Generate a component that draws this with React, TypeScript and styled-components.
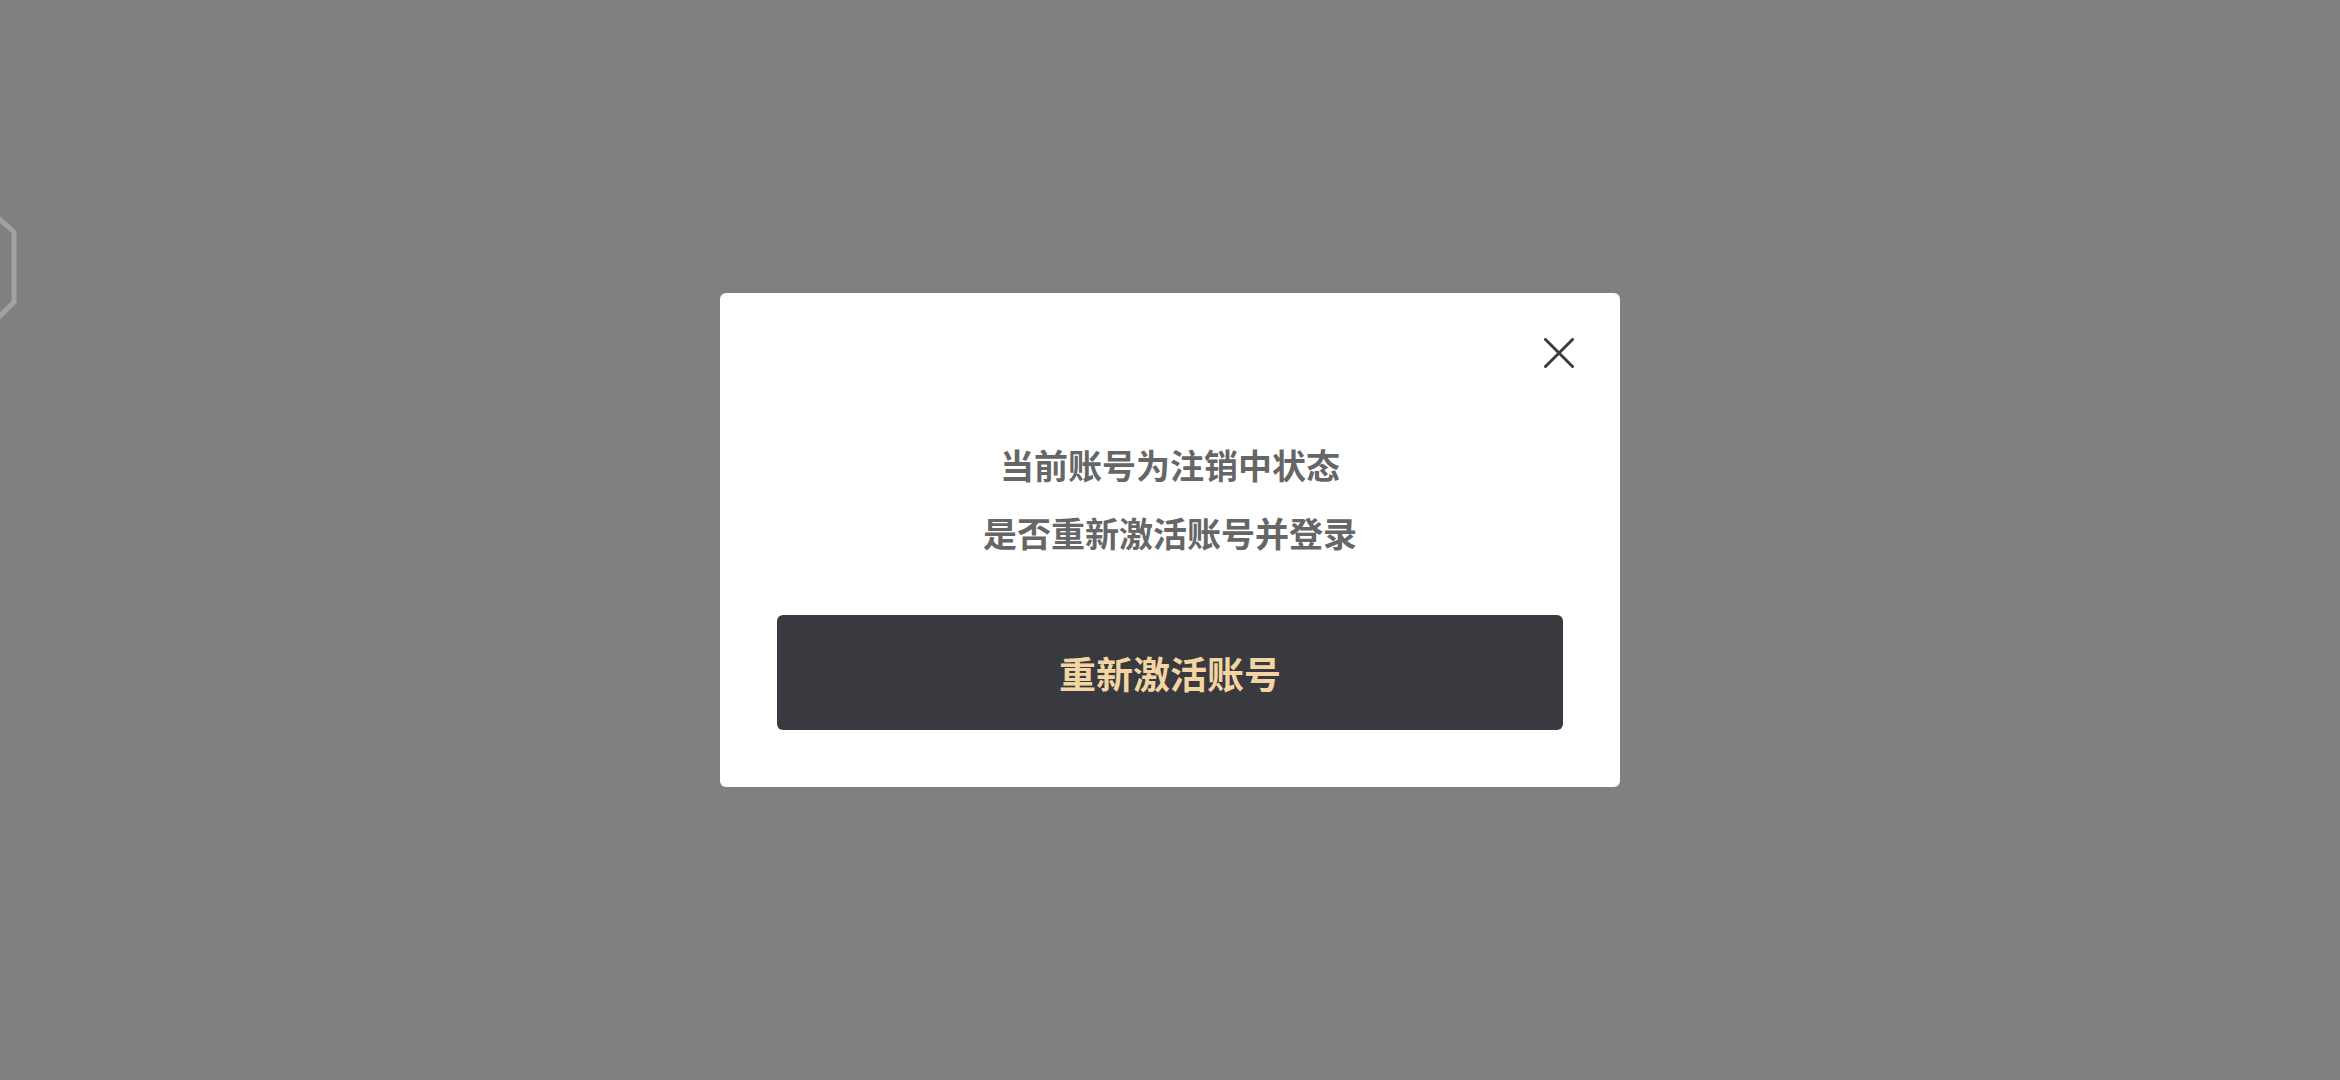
import React from "react";
import styled, { createGlobalStyle } from "styled-components";

const GlobalStyle = createGlobalStyle`
  html, body {
    margin: 0;
    padding: 0;
    width: 100%;
    height: 100%;
    background: #808080;
    font-family: "Noto Sans CJK SC", "Noto Sans", sans-serif;
  }
  #root {
    height: 100%;
  }
`;

const Page = styled.div`
  position: relative;
  width: 100vw;
  height: 100vh;
  overflow: hidden;
  background: #808080;
  display: flex;
  align-items: center;
  justify-content: center;
`;

const BackShape = styled.svg`
  position: absolute;
  left: 0;
  top: 212px;
`;

const Dialog = styled.div`
  box-sizing: border-box;
  width: 900px;
  height: 494px;
  background: #ffffff;
  border-radius: 6px;
  padding: 45px 57px 56px;
  display: flex;
  flex-direction: column;
`;

const Header = styled.div`
  display: flex;
  justify-content: flex-end;
  margin-right: -11px;
  height: 30px;
`;

const CloseButton = styled.button`
  width: 30px;
  height: 30px;
  padding: 0;
  border: none;
  background: transparent;
  cursor: pointer;
  display: flex;
`;

const Message = styled.div`
  margin-top: 64px;
  display: flex;
  flex-direction: column;
  align-items: center;
  gap: 3px;
`;

const Line = styled.div`
  font-size: 34px;
  font-weight: 700;
  line-height: 65px;
  color: #666666;
`;

const Activate = styled.button`
  margin-top: 50px;
  height: 115px;
  width: 100%;
  border: none;
  border-radius: 6px;
  background: #393a3f;
  color: #f3d5a3;
  font-family: "Noto Sans CJK SC", "Noto Sans", sans-serif;
  font-size: 37px;
  font-weight: 700;
  cursor: pointer;
`;

export default function App() {
  return (
    <>
      <GlobalStyle />
      <Page>
        <BackShape width="20" height="112" viewBox="0 0 20 112">
          <polyline
            points="-4,4 14,20 14,90 -4,108"
            fill="none"
            stroke="#a2a2a2"
            strokeWidth="5"
            strokeLinejoin="round"
          />
        </BackShape>
        <Dialog>
          <Header>
            <CloseButton aria-label="关闭">
              <svg width="30" height="30" viewBox="0 0 30 30">
                <path
                  d="M1.5 1.5 L28.5 28.5 M28.5 1.5 L1.5 28.5"
                  stroke="#3c3c3c"
                  strokeWidth="3"
                  strokeLinecap="round"
                />
              </svg>
            </CloseButton>
          </Header>
          <Message>
            <Line>当前账号为注销中状态</Line>
            <Line>是否重新激活账号并登录</Line>
          </Message>
          <Activate>重新激活账号</Activate>
        </Dialog>
      </Page>
    </>
  );
}
